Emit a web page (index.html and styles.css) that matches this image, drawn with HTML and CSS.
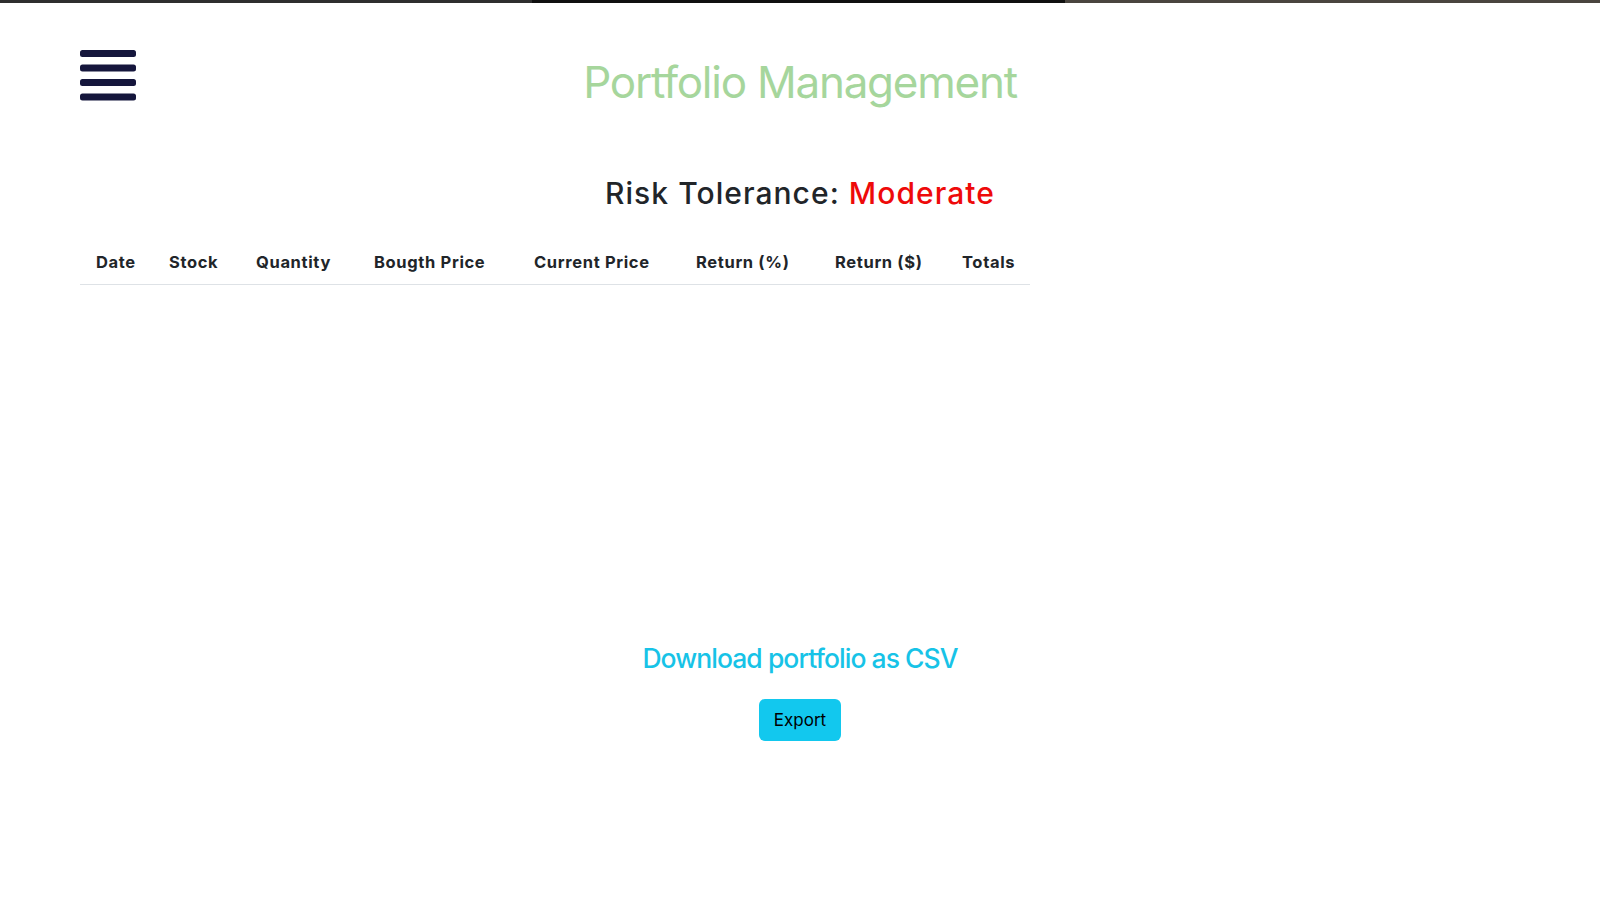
FILE: index.html
```html
<!DOCTYPE html>
<html lang="en">
<head>
<meta charset="utf-8">
<title>Portfolio Management</title>
<link rel="stylesheet" href="styles.css">
</head>
<body>
<div class="topbar"><span class="seg seg-a"></span><span class="seg seg-b"></span><span class="seg seg-c"></span></div>
<header class="header">
  <button class="menu" aria-label="Menu">
    <svg width="56" height="51" viewBox="0 0 56 51"><rect x="0" y="0" width="56" height="7" rx="2.5"/><rect x="0" y="14.5" width="56" height="7" rx="2.5"/><rect x="0" y="29" width="56" height="7" rx="2.5"/><rect x="0" y="43.5" width="56" height="7" rx="2.5"/></svg>
  </button>
  <h1 class="title">Portfolio Management</h1>
  <div></div>
</header>
<main class="main">
  <h3 class="risk">Risk Tolerance: <span class="risk-level">Moderate</span></h3>
  <table class="table">
    <colgroup>
      <col class="c1"><col class="c2"><col class="c3"><col class="c4"><col class="c5"><col class="c6"><col class="c7"><col class="c8">
    </colgroup>
    <thead>
      <tr><th>Date</th><th>Stock</th><th>Quantity</th><th>Bougth Price</th><th>Current Price</th><th>Return (%)</th><th>Return ($)</th><th>Totals</th></tr>
    </thead>
    <tbody></tbody>
  </table>
  <section class="export">
    <h3 class="export-title">Download portfolio as CSV</h3>
    <button class="btn">Export</button>
  </section>
</main>
</body>
</html>
```
FILE: styles.css
```css
html, body { margin: 0; padding: 0; background: #fff; }
body { font-family: Inter, "Noto Sans", "Liberation Sans", sans-serif; color: #212529; }

.topbar { display: flex; height: 3px; }
.seg { flex: 0 0 auto; height: 100%; }
.seg-a { width: 532px; background: #2e2e2e; }
.seg-b { width: 533px; background: #101010; }
.seg-c { flex: 1 1 auto; background: #4a453f; }

.header {
  display: grid;
  grid-template-columns: 1fr auto 1fr;
  align-items: start;
  padding: 47px 80px 0;
}
.menu { border: 0; background: none; padding: 0; margin: 0; width: 56px; height: 51px; cursor: pointer; }
.menu svg { display: block; fill: #15163c; }
.title {
  margin: 5px 0 0;
  font-size: 44px;
  line-height: 54px;
  font-weight: 400;
  color: #a6d69c;
  letter-spacing: -1.25px;
}

.main { padding: 0 80px; }
.risk {
  margin: 67px 0 0;
  text-align: center;
  font-size: 30px;
  line-height: 35px;
  font-weight: 500;
  letter-spacing: 1.05px;
  color: #212529;
}
.risk-level { color: #ee0a0a; }

.table {
  width: 950px;
  margin-top: 31px;
  border-collapse: collapse;
  table-layout: fixed;
}
.c1 { width: 73px; } .c2 { width: 87px; } .c3 { width: 118px; } .c4 { width: 160px; }
.c5 { width: 162px; } .c6 { width: 139px; } .c7 { width: 127px; } .c8 { width: 84px; }
.table th {
  text-align: left;
  font-size: 16.5px;
  line-height: 24px;
  font-weight: 700;
  letter-spacing: 0.65px;
  padding: 8px 16px 10px;
  border-bottom: 1.5px solid #dee2e6;
  white-space: nowrap;
  color: #212529;
}

.export { display: flex; flex-direction: column; align-items: center; margin-top: 356px; }
.export-title {
  margin: 0;
  font-size: 26.5px;
  line-height: 34px;
  font-weight: 500;
  letter-spacing: -0.95px;
  color: #17c3e7;
}
.btn {
  margin-top: 24px;
  height: 42px;
  padding: 0 15px;
  border: 0;
  border-radius: 6px;
  background: #12c8ee;
  color: #000;
  font-family: Inter, "Noto Sans", sans-serif;
  font-size: 17px;
  cursor: pointer;
}
```
